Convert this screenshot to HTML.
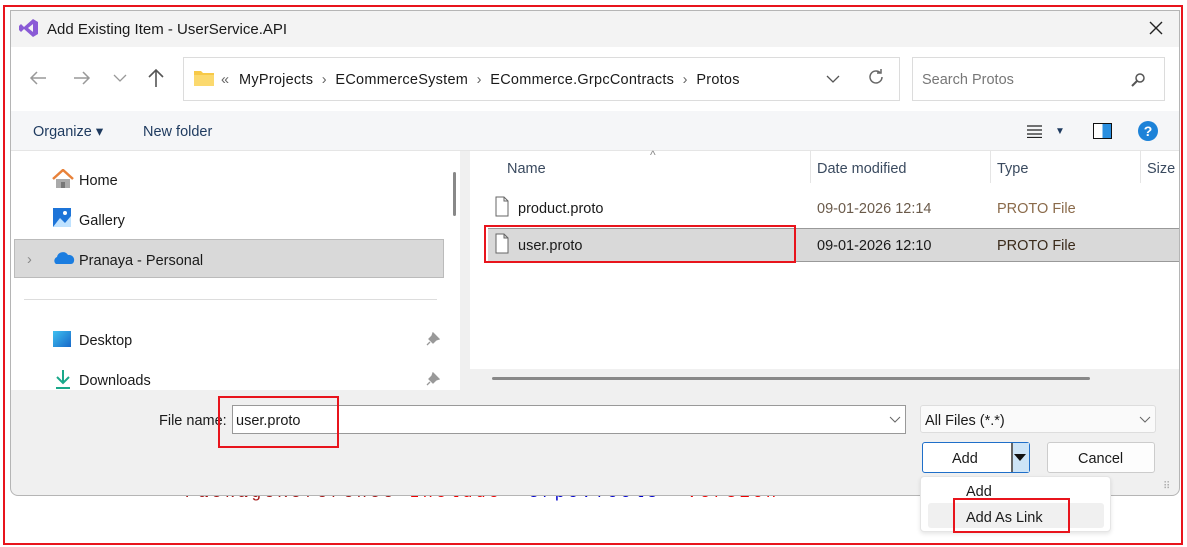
<!DOCTYPE html>
<html><head><style>
*{box-sizing:border-box;margin:0;padding:0}
body{width:1187px;height:547px;background:#fff;position:relative;overflow:hidden;font-family:"Liberation Sans","DejaVu Sans",sans-serif;font-size:14.5px;color:#1a1a1a}
.a{position:absolute}
.red{position:absolute;border:2.5px solid #e8141c}
.t{position:absolute;white-space:nowrap;transform:translateY(2px)}
</style></head><body>
<!-- background code -->
<div class="t" style="left:185px;top:482px;font-family:'Liberation Mono',monospace;font-size:17px;letter-spacing:3px;color:#a31515">PackageReference <span style="color:#e00">Include</span>=<span style="color:#00c">"Grpc.Tools"</span> <span style="color:#e00">Version</span></div>
<!-- dialog -->
<div class="a" style="left:10px;top:10px;width:1170px;height:486px;background:#f0f0f0;border:1px solid #b5b5b5;border-radius:0 0 8px 8px"></div>
<div class="a" style="left:11px;top:11px;width:1168px;height:36px;background:#f3f3f3"></div>
<svg class="a" style="left:19px;top:18px" width="20" height="20" viewBox="0 0 20 20"><path d="M14 1 L19 4 V16 L14 19 L5 11 L2 14 L0 12 V8 L2 6 L5 9 Z" fill="#8a5bd6"/><path d="M14 6 V14 L9 10 Z" fill="#f3f3f3"/></svg>
<div class="t" style="left:47px;top:19px;font-size:15px">Add Existing Item - UserService.API</div>
<svg class="a" style="left:1149px;top:21px" width="14" height="14"><path d="M1 1 L13 13 M13 1 L1 13" stroke="#222" stroke-width="1.4"/></svg>
<div class="a" style="left:11px;top:47px;width:1168px;height:64px;background:#fff"></div>
<svg class="a" style="left:29px;top:71px" width="18" height="14"><path d="M17 7 H2 M8 1 L2 7 L8 13" stroke="#999" fill="none" stroke-width="1.5"/></svg>
<svg class="a" style="left:73px;top:71px" width="18" height="14"><path d="M1 7 H16 M10 1 L16 7 L10 13" stroke="#999" fill="none" stroke-width="1.5"/></svg>
<svg class="a" style="left:113px;top:74px" width="14" height="8"><path d="M1 1 L7 7 L13 1" stroke="#999" fill="none" stroke-width="1.3"/></svg>
<svg class="a" style="left:147px;top:68px" width="18" height="20"><path d="M9 19 V2 M2 9 L9 2 L16 9" stroke="#555" fill="none" stroke-width="1.6"/></svg>
<div class="a" style="left:183px;top:57px;width:717px;height:44px;border:1px solid #dcdcdc;background:#fff"></div>
<svg class="a" style="left:194px;top:70px" width="20" height="16"><path d="M0 1 H7 L9 3 H20 V16 H0Z" fill="#f7c948"/><path d="M0 5 H20 V16 H0Z" fill="#fbd96e"/></svg>
<div class="t" style="left:221px;top:70px;color:#666">«</div>
<div class="t" style="left:239px;top:70px;letter-spacing:0.25px">MyProjects &nbsp;<span style="color:#666">›</span>&nbsp; ECommerceSystem &nbsp;<span style="color:#666">›</span>&nbsp; ECommerce.GrpcContracts &nbsp;<span style="color:#666">›</span>&nbsp; Protos</div>
<svg class="a" style="left:826px;top:75px" width="14" height="8"><path d="M1 1 L7 7 L13 1" stroke="#555" fill="none" stroke-width="1.3"/></svg>
<svg class="a" style="left:867px;top:68px" width="18" height="18"><path d="M15 9 A6 6 0 1 1 13 4.5" stroke="#666" fill="none" stroke-width="1.5"/><path d="M14 1 V5 H10" stroke="#666" fill="none" stroke-width="1.5"/></svg>
<div class="a" style="left:912px;top:57px;width:253px;height:44px;border:1px solid #dcdcdc;background:#fff"></div>
<div class="t" style="left:922px;top:70px;color:#777">Search Protos</div>
<svg class="a" style="left:1131px;top:73px" width="14" height="14"><circle cx="9" cy="5" r="4" stroke="#555" fill="none" stroke-width="1.5"/><path d="M6 8 L1 13" stroke="#555" stroke-width="2"/></svg>
<div class="a" style="left:11px;top:111px;width:1168px;height:40px;background:#f5f6f8;border-bottom:1px solid #e5e5e5"></div>
<div class="t" style="left:33px;top:122px;color:#1e3a5f">Organize ▾</div>
<div class="t" style="left:143px;top:122px;color:#1e3a5f">New folder</div>
<svg class="a" style="left:1027px;top:125px" width="15" height="13"><path d="M0 1H15M0 5H15M0 9H15M0 12.5H15" stroke="#222" stroke-width="1.2"/></svg>
<div class="t" style="left:1055px;top:124px;font-size:10px;color:#1e3a5f">▼</div>
<div class="a" style="left:1093px;top:123px;width:19px;height:16px;border:1.5px solid #111;background:linear-gradient(90deg,#fff 50%,#2a8fe0 50%)"></div>
<div class="a" style="left:1138px;top:121px;width:20px;height:20px;border-radius:50%;background:#1c82d8;color:#fff;font-size:14px;font-weight:bold;text-align:center;line-height:20px">?</div>
<!-- left nav -->
<div class="a" style="left:11px;top:151px;width:449px;height:239px;background:#fff"></div>
<div class="a" style="left:453px;top:172px;width:3px;height:44px;background:#888;border-radius:2px"></div>
<svg class="a" style="left:52px;top:169px" width="22" height="20"><path d="M1 10 L11 1 L21 10" stroke="#e8823a" fill="none" stroke-width="2.5"/><path d="M4 10 V19 H18 V10" fill="#aaa"/><rect x="9" y="13" width="4" height="6" fill="#777"/></svg>
<div class="t" style="left:79px;top:171px">Home</div>
<svg class="a" style="left:53px;top:208px" width="20" height="21"><rect x="0" y="0" width="18" height="19" fill="#1d74d8"/><path d="M0 19 L7 10 L12 15 L18 8 V19Z" fill="#bfe2ff"/><circle cx="12" cy="5" r="2" fill="#fff"/></svg>
<div class="t" style="left:79px;top:211px">Gallery</div>
<div class="a" style="left:14px;top:239px;width:430px;height:39px;background:#d9d9d9;border:1px solid #bbb"></div>
<div class="t" style="left:27px;top:250px;color:#888">›</div>
<svg class="a" style="left:53px;top:251px" width="22" height="14"><path d="M3 13 A4 4 0 0 1 4 6 A6 6 0 0 1 15 4 A5 5 0 0 1 21 10 A3 3 0 0 1 18 13Z" fill="#1b7de0"/></svg>
<div class="t" style="left:79px;top:251px">Pranaya - Personal</div>
<div class="a" style="left:24px;top:299px;width:413px;height:1px;background:#ddd"></div>
<div class="a" style="left:53px;top:331px;width:18px;height:16px;background:linear-gradient(135deg,#3ec0f0,#1868c8)"></div>
<div class="t" style="left:79px;top:331px">Desktop</div>
<svg class="a" style="left:55px;top:369px" width="16" height="20"><path d="M8 1 V13 M2 8 L8 14 L14 8 M1 19 H15" stroke="#1aa88a" fill="none" stroke-width="2"/></svg>
<div class="t" style="left:79px;top:371px">Downloads</div>
<svg class="a" style="left:426px;top:332px" width="14" height="14"><path d="M7 1 L13 7 L10 8 L7 11 L3 7 L6 4Z M4 10 L1 13" stroke="#999" fill="#999" stroke-width="1.3"/></svg>
<svg class="a" style="left:426px;top:372px" width="14" height="14"><path d="M7 1 L13 7 L10 8 L7 11 L3 7 L6 4Z M4 10 L1 13" stroke="#999" fill="#999" stroke-width="1.3"/></svg>
<!-- right pane -->
<div class="a" style="left:470px;top:151px;width:709px;height:218px;background:#fff"></div>
<div class="a" style="left:470px;top:369px;width:709px;height:21px;background:#f0f0f0"></div>
<div class="a" style="left:492px;top:377px;width:598px;height:3px;background:#888;border-radius:2px"></div>
<div class="t" style="left:650px;top:146px;color:#888;font-size:12px">^</div>
<div class="t" style="left:507px;top:159px;color:#3a4a5f">Name</div>
<div class="a" style="left:810px;top:151px;width:1px;height:32px;background:#e5e5e5"></div>
<div class="a" style="left:990px;top:151px;width:1px;height:32px;background:#e5e5e5"></div>
<div class="a" style="left:1140px;top:151px;width:1px;height:32px;background:#e5e5e5"></div>
<div class="t" style="left:817px;top:159px;color:#3a4a5f">Date modified</div>
<div class="t" style="left:997px;top:159px;color:#3a4a5f">Type</div>
<div class="t" style="left:1147px;top:159px;color:#3a4a5f">Size</div>
<svg class="a" style="left:495px;top:196px" width="14" height="21"><path d="M1 1 H9 L13 5 V20 H1Z M9 1 V5 H13" stroke="#666" fill="#fff"/></svg>
<div class="t" style="left:518px;top:199px">product.proto</div>
<div class="t" style="left:817px;top:199px;color:#6a5a4a">09-01-2026 12:14</div>
<div class="t" style="left:997px;top:199px;color:#8a6a4a">PROTO File</div>
<div class="a" style="left:488px;top:228px;width:691px;height:34px;background:#d9d9d9;border-top:1px solid #999;border-bottom:1px solid #999"></div>
<svg class="a" style="left:495px;top:233px" width="14" height="21"><path d="M1 1 H9 L13 5 V20 H1Z M9 1 V5 H13" stroke="#666" fill="#fff"/></svg>
<div class="t" style="left:518px;top:236px">user.proto</div>
<div class="t" style="left:817px;top:236px">09-01-2026 12:10</div>
<div class="t" style="left:997px;top:236px;color:#3a2a1a">PROTO File</div>
<div class="red" style="left:484px;top:225px;width:312px;height:38px"></div>
<!-- bottom -->
<div class="t" style="left:159px;top:411px">File name:</div>
<div class="a" style="left:232px;top:405px;width:674px;height:29px;background:#fff;border:1px solid #999"></div>
<div class="t" style="left:236px;top:411px">user.proto</div>
<svg class="a" style="left:889px;top:416px" width="12" height="7"><path d="M1 1 L6 6 L11 1" stroke="#666" fill="none"/></svg>
<div class="red" style="left:218px;top:396px;width:121px;height:52px"></div>
<div class="a" style="left:920px;top:405px;width:236px;height:28px;background:#fafafa;border:1px solid #ddd;border-radius:3px"></div>
<div class="t" style="left:925px;top:411px">All Files (*.*)</div>
<svg class="a" style="left:1139px;top:416px" width="12" height="7"><path d="M1 1 L6 6 L11 1" stroke="#666" fill="none"/></svg>
<div class="a" style="left:922px;top:442px;width:108px;height:31px;background:#fff;border:1.5px solid #1f6fc9;border-radius:3px"></div>
<div class="a" style="left:1011px;top:443px;width:18px;height:29px;background:#cde4f7;border-left:2px solid #666"></div>
<svg class="a" style="left:1014px;top:454px" width="12" height="7"><path d="M0 0 H12 L6 7Z" fill="#111"/></svg>
<div class="t" style="left:952px;top:449px">Add</div>
<div class="a" style="left:1047px;top:442px;width:108px;height:31px;background:#fdfdfd;border:1px solid #ccc;border-radius:3px"></div>
<div class="t" style="left:1078px;top:449px">Cancel</div>
<div class="t" style="left:1163px;top:479px;color:#aaa;font-size:10px">⠿</div>
<div class="a" style="left:920px;top:476px;width:191px;height:56px;background:#fff;border:1px solid #e5e5e5;border-radius:4px;box-shadow:0 2px 4px rgba(0,0,0,.1)"></div>
<div class="t" style="left:966px;top:482px">Add</div>
<div class="a" style="left:928px;top:503px;width:176px;height:25px;background:#f0f0f0;border-radius:3px"></div>
<div class="t" style="left:966px;top:508px">Add As Link</div>
<div class="red" style="left:953px;top:498px;width:117px;height:35px"></div>
<!-- outer red -->
<div class="red" style="left:3px;top:5px;width:1180px;height:540px"></div>
</body></html>
